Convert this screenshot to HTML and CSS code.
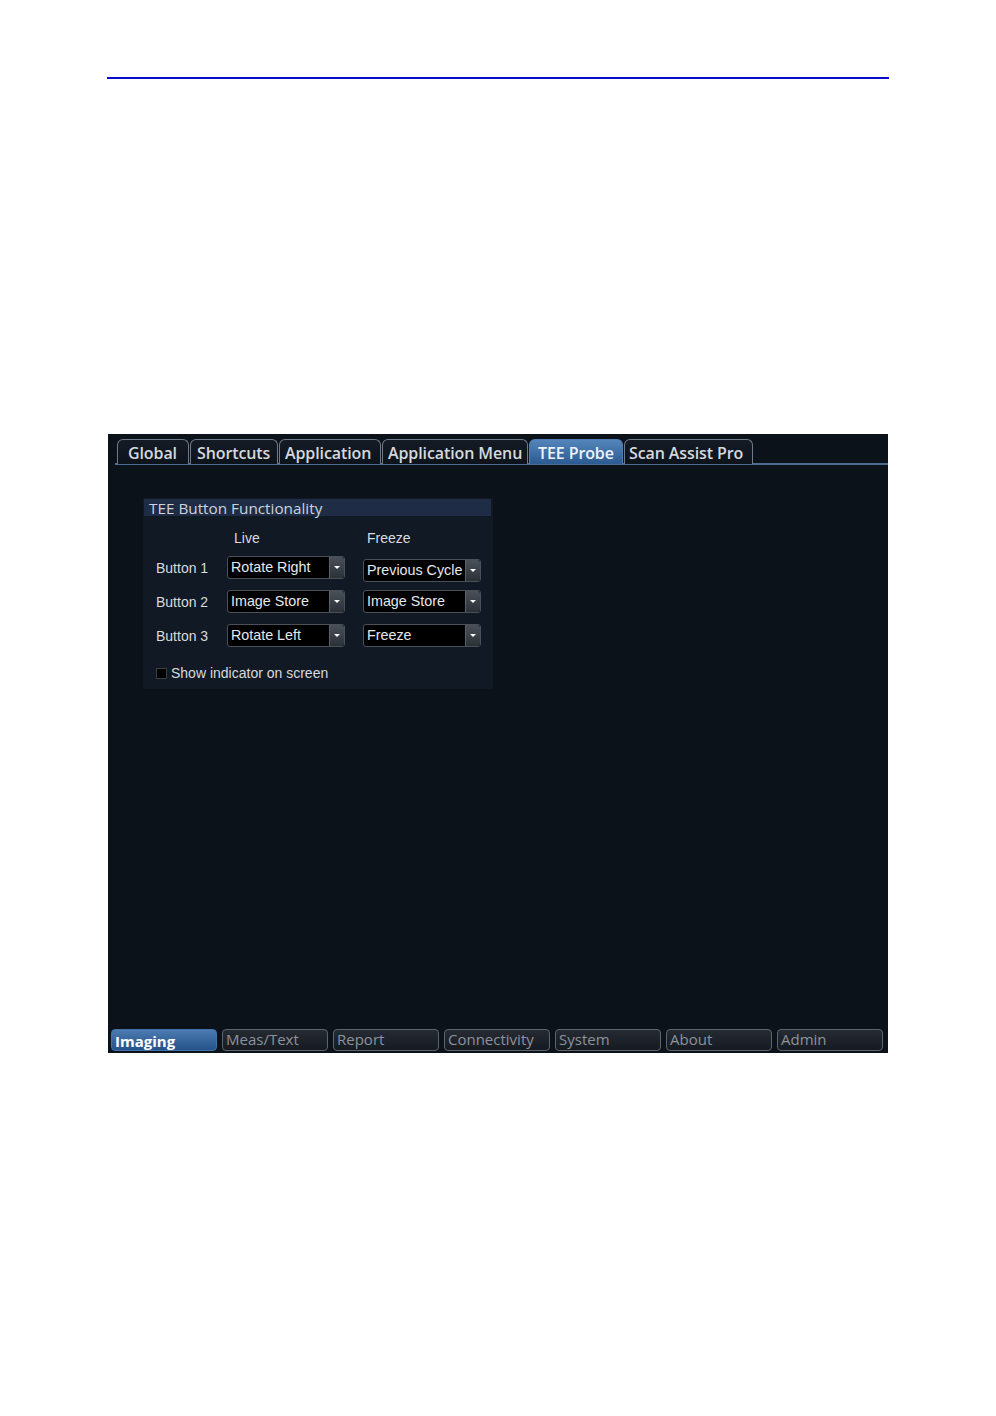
FILE: index.html
```html
<!DOCTYPE html>
<html>
<head>
<meta charset="utf-8">
<link rel="stylesheet" href="styles.css">
</head>
<body>
<div class="rule"></div>
<div class="screen">
  <div class="tabs">
    <div class="tab w-global">Global</div>
    <div class="tab w-short">Shortcuts</div>
    <div class="tab w-app">Application</div>
    <div class="tab w-menu">Application Menu</div>
    <div class="tab active w-tee">TEE Probe</div>
    <div class="tab w-scan">Scan Assist Pro</div>
  </div>
  <div class="content">
    <div class="group">
      <div class="group-title">TEE Button Functionality</div>
      <div class="grid">
        <div></div>
        <div class="colhead">Live</div>
        <div class="colhead freeze">Freeze</div>

        <div class="label">Button 1</div>
        <div class="select"><span class="val">Rotate Right</span><span class="arrow"></span></div>
        <div class="select low"><span class="val">Previous Cycle</span><span class="arrow"></span></div>

        <div class="label">Button 2</div>
        <div class="select"><span class="val">Image Store</span><span class="arrow"></span></div>
        <div class="select"><span class="val">Image Store</span><span class="arrow"></span></div>

        <div class="label">Button 3</div>
        <div class="select"><span class="val">Rotate Left</span><span class="arrow"></span></div>
        <div class="select"><span class="val">Freeze</span><span class="arrow"></span></div>
      </div>
      <div class="check"><span class="box"></span><span>Show indicator on screen</span></div>
    </div>
  </div>
  <div class="bottom">
    <div class="btab active">Imaging</div>
    <div class="btab">Meas/Text</div>
    <div class="btab">Report</div>
    <div class="btab">Connectivity</div>
    <div class="btab">System</div>
    <div class="btab">About</div>
    <div class="btab">Admin</div>
  </div>
</div>
</body>
</html>
```

FILE: styles.css
```css
html, body {
  margin: 0;
  padding: 0;
  background: #ffffff;
}
body {
  width: 996px;
  height: 1416px;
  font-family: "Liberation Sans", Arial, sans-serif;
}
.rule {
  margin: 77px 0 0 107px;
  width: 782px;
  height: 2px;
  background: #0a0acb;
}
.screen {
  margin: 355px 0 0 108px;
  width: 780px;
  height: 619px;
  background: #0c1219;
  display: flex;
  flex-direction: column;
  box-sizing: border-box;
}
.tabs {
  display: flex;
  gap: 1px;
  margin: 5px 0 0 7px;
  padding-left: 2px;
  border-bottom: 2px solid #4d6c93;
  height: 24px;
  box-sizing: content-box;
}
.tab {
  box-sizing: border-box;
  height: 25px;
  border: 1px solid #6f7b8a;
  border-bottom: none;
  border-radius: 6px 6px 0 0;
  background: linear-gradient(#141b25, #0d131b);
  color: #d5d9de;
  font-family: "Open Sans", "Noto Sans", sans-serif;
  font-weight: 600;
  font-size: 16px;
  line-height: 26px;
  padding-left: 8px;
  white-space: nowrap;
  overflow: hidden;
  letter-spacing: -0.1px;
}
.tab.active {
  background: linear-gradient(#5385bb, #2b5b91);
  border-color: #4f7fb2;
  color: #eef3f8;
}
.w-global { width: 72px; padding-left: 10px; }
.w-short { width: 88px; padding-left: 6px; }
.w-app { width: 102px; padding-left: 5px; }
.w-menu { width: 146px; padding-left: 5px; }
.w-tee { width: 94px; padding-left: 8px; }
.w-scan { width: 129px; padding-left: 4px; }

.content {
  flex: 1;
  padding: 33px 0 0 35px;
}
.group {
  width: 350px;
  height: 191px;
  background: #111924;
  box-sizing: border-box;
  padding: 1px 2px 0 1px;
}
.group-title {
  height: 17px;
  background: #1e2c45;
  color: #cdd3dc;
  font-family: "Open Sans", "Noto Sans", sans-serif;
  font-size: 15.3px;
  line-height: 18px;
  padding-left: 5px;
  white-space: nowrap;
}
.grid {
  display: grid;
  grid-template-columns: 53px 118px 118px;
  column-gap: 18px;
  grid-template-rows: 21px 34px 34px 34px;
  padding: 4px 0 0 12px;
  color: #d8dbdf;
  font-size: 14px;
}
.colhead {
  padding-left: 7px;
  height: 21px;
  line-height: 36px;
}
.colhead.freeze {
  padding-left: 4px;
}
.label {
  line-height: 23px;
  margin-top: 15px;
  padding-top: 1px;
  white-space: nowrap;
}
.select {
  margin-top: 15px;
  height: 23px;
  box-sizing: border-box;
  border: 1px solid #4a5058;
  border-radius: 3px;
  background: #000000;
  display: flex;
  color: #e6e8ea;
  font-size: 14.3px;
}
.select.low {
  margin-top: 18px;
}
.val {
  flex: 1;
  padding-left: 3px;
  line-height: 20px;
  white-space: nowrap;
  overflow: hidden;
}
.arrow {
  width: 14px;
  background: linear-gradient(#4a5058, #2c3138);
  border-left: 1px solid #5a6068;
  border-radius: 0 3px 3px 0;
  position: relative;
}
.arrow::after {
  content: "";
  position: absolute;
  left: 4px;
  top: 9px;
  border-left: 3px solid transparent;
  border-right: 3px solid transparent;
  border-top: 3px solid #ffffff;
}
.check {
  display: flex;
  align-items: center;
  gap: 4px;
  margin: 22px 0 0 12px;
  color: #d8dbdf;
  font-size: 14px;
}
.box {
  width: 9px;
  height: 9px;
  border: 1px solid #3a3f46;
  background: #000;
}

.bottom {
  display: flex;
  gap: 5px;
  padding: 0 0 2px 3px;
}
.btab {
  box-sizing: border-box;
  width: 106px;
  height: 22px;
  border: 1px solid #5e646c;
  border-radius: 4px;
  background: linear-gradient(#262b33, #151a21);
  color: #8d929a;
  font-family: "Open Sans", "Noto Sans", sans-serif;
  font-size: 15px;
  line-height: 19px;
  padding-left: 3px;
  white-space: nowrap;
}
.btab.active {
  background: linear-gradient(#4b7bb0, #24528a);
  border-color: #4272a8;
  color: #ffffff;
  font-weight: 700;
  line-height: 22px;
}
```
